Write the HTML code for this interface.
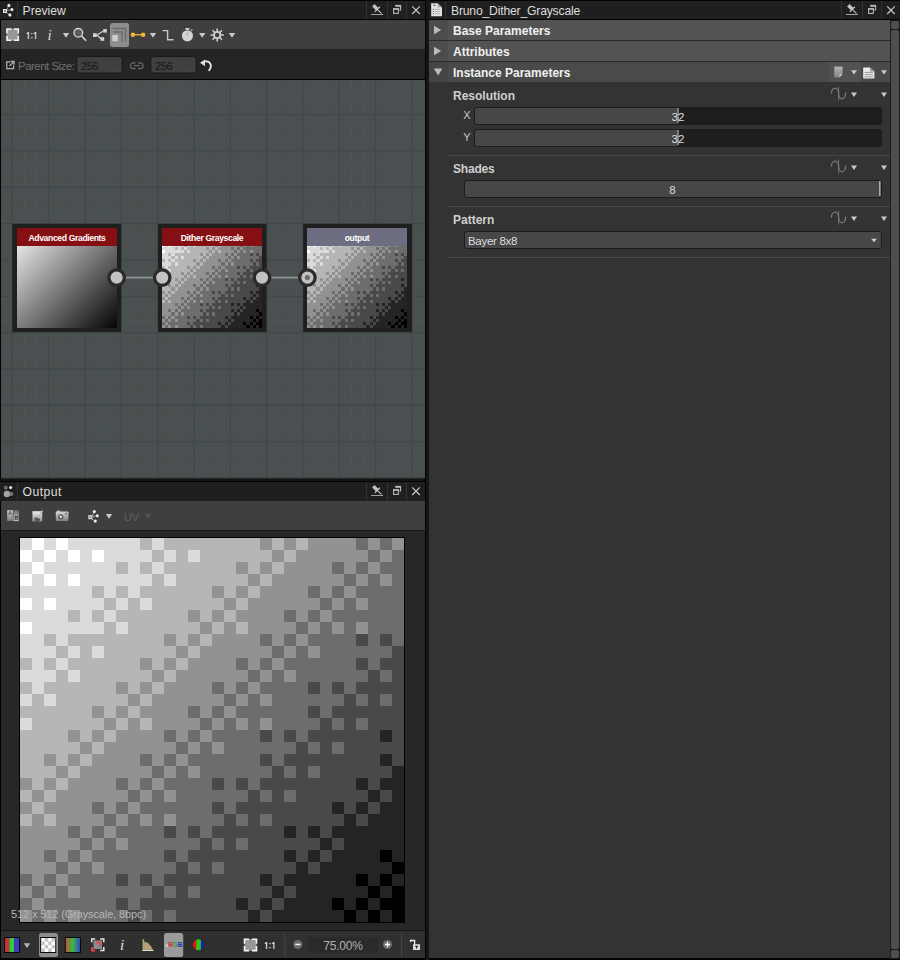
<!DOCTYPE html>
<html><head><meta charset="utf-8"><title>Bruno_Dither_Grayscale</title>
<style>
html,body{margin:0;padding:0;}
body{width:900px;height:960px;background:#020202;position:relative;overflow:hidden;font-family:"Liberation Sans",sans-serif;font-size:13px;color:#d6d6d6;}
.a{position:absolute;}
.t{position:absolute;white-space:nowrap;line-height:1;}
svg{position:absolute;overflow:visible;}
.ntitle{text-align:center;font-weight:bold;font-size:8.6px;color:#fff;letter-spacing:-0.36px;}
.titlebar{background:#1f1f1f;}
.vsep{position:absolute;width:1px;background:#323232;}
.hdr{position:absolute;left:429px;width:461px;height:20px;background:#535353;}
.hdr .arr{position:absolute;left:0;top:0;width:19px;height:20px;background:#4c4c4c;}
.hdr .t{left:24px;top:5px;font-weight:bold;font-size:12px;color:#f0f0f0;}
.plabel{font-weight:bold;font-size:12px;color:#cfcfcf;}
.slider{position:absolute;height:15.5px;border:1px solid #1c1c1c;border-radius:3px;background:#1e1e1e;overflow:hidden;}
.slider .fill{position:absolute;left:0;top:0;bottom:0;background:#474747;}
.sep{position:absolute;left:448px;width:442px;height:1px;background:#474747;}
</style></head><body>

<!-- ================= LEFT: PREVIEW PANEL ================= -->
<div class="a titlebar" style="left:0;top:1px;width:425px;height:18px;"></div>
<div class="vsep" style="left:17px;top:1px;height:18px;"></div>
<div class="t" style="left:22.5px;top:4.5px;font-size:12.2px;color:#dcdcdc;">Preview</div>
<div class="vsep" style="left:366px;top:1px;height:18px;"></div>
<div class="vsep" style="left:387px;top:1px;height:18px;"></div>
<div class="vsep" style="left:406px;top:1px;height:18px;"></div>

<div class="a" style="left:1px;top:20px;width:424px;height:29px;background:#3f3f3f;"></div>
<div class="a" style="left:1px;top:49px;width:424px;height:30px;background:#242424;"></div>

<!-- graph view -->
<div class="a" id="graph" style="left:1px;top:80px;width:424px;height:398px;background-color:#4a5050;"></div>
<svg style="left:1px;top:80px;" width="424" height="398" viewBox="1 80 424 398">
<path d="M24.41 80V478M36.52 80V478M60.74 80V478M72.86 80V478M97.08 80V478M109.19 80V478M133.41 80V478M145.52 80V478M169.74 80V478M181.86 80V478M206.08 80V478M218.19 80V478M242.41 80V478M254.52 80V478M278.74 80V478M290.86 80V478M315.08 80V478M327.19 80V478M351.41 80V478M363.52 80V478M387.74 80V478M399.86 80V478M424.08 80V478M1 90.38H425M1 102.49H425M1 126.71H425M1 138.82H425M1 163.04H425M1 175.16H425M1 199.38H425M1 211.49H425M1 235.71H425M1 247.82H425M1 272.04H425M1 284.16H425M1 308.38H425M1 320.49H425M1 344.71H425M1 356.82H425M1 381.04H425M1 393.16H425M1 417.38H425M1 429.49H425M1 453.71H425M1 465.82H425" stroke="#50575a" stroke-opacity="0.75" stroke-width="1" fill="none"/><path d="M12.30 80V478M48.63 80V478M84.97 80V478M121.30 80V478M157.63 80V478M193.97 80V478M230.30 80V478M266.63 80V478M302.97 80V478M339.30 80V478M375.63 80V478M411.97 80V478M1 114.60H425M1 150.93H425M1 187.27H425M1 223.60H425M1 259.93H425M1 296.27H425M1 332.60H425M1 368.93H425M1 405.27H425M1 441.60H425M1 477.93H425" stroke="#41484a" stroke-width="1.3" fill="none"/>
<!-- wires -->
<path d="M117 277.6H162M262 277.6H307" stroke="#8e9494" stroke-width="1.6" fill="none"/>
<!-- node frames -->
<rect x="12.3" y="223.8" width="108.9" height="108.2" fill="#1f1f1f"/>
<rect x="158" y="223.8" width="108.6" height="108.2" fill="#1f1f1f"/>
<rect x="303.2" y="223.8" width="108.8" height="108.2" fill="#1f1f1f"/>
</svg>
<div class="a" style="left:17px;top:228px;width:100px;height:100px;background:linear-gradient(to bottom right,#fbfbfb,#040404);"></div>
<svg style="left:162px;top:228px;" width="100" height="100" viewBox="0 0 32 32" shape-rendering="crispEdges"><rect width="32" height="32" fill="#000000"/><path fill="#242424" d="M0 0h32v1h-32zM0 1h32v1h-32zM0 2h32v1h-32zM0 3h32v1h-32zM0 4h32v1h-32zM0 5h32v1h-32zM0 6h32v1h-32zM0 7h32v1h-32zM0 8h32v1h-32zM0 9h32v1h-32zM0 10h32v1h-32zM0 11h32v1h-32zM0 12h32v1h-32zM0 13h32v1h-32zM0 14h32v1h-32zM0 15h32v1h-32zM0 16h32v1h-32zM0 17h32v1h-32zM0 18h32v1h-32zM0 19h32v1h-32zM0 20h32v1h-32zM0 21h32v1h-32zM0 22h32v1h-32zM0 23h32v1h-32zM0 24h32v1h-32zM0 25h32v1h-32zM0 26h30v1h-30zM31 26h1v1h-1zM0 27h31v1h-31zM0 28h28v1h-28zM29 28h1v1h-1zM31 28h1v1h-1zM0 29h29v1h-29zM30 29h1v1h-1zM0 30h26v1h-26zM27 30h1v1h-1zM29 30h1v1h-1zM0 31h27v1h-27zM28 31h1v1h-1zM30 31h1v1h-1z"/><path fill="#494949" d="M0 0h32v1h-32zM0 1h32v1h-32zM0 2h32v1h-32zM0 3h32v1h-32zM0 4h32v1h-32zM0 5h32v1h-32zM0 6h32v1h-32zM0 7h32v1h-32zM0 8h32v1h-32zM0 9h32v1h-32zM0 10h32v1h-32zM0 11h32v1h-32zM0 12h32v1h-32zM0 13h32v1h-32zM0 14h32v1h-32zM0 15h32v1h-32zM0 16h30v1h-30zM31 16h1v1h-1zM0 17h32v1h-32zM0 18h30v1h-30zM31 18h1v1h-1zM0 19h31v1h-31zM0 20h28v1h-28zM29 20h1v1h-1zM0 21h29v1h-29zM30 21h1v1h-1zM0 22h26v1h-26zM27 22h1v1h-1zM29 22h1v1h-1zM0 23h27v1h-27zM28 23h1v1h-1zM0 24h22v1h-22zM23 24h1v1h-1zM25 24h1v1h-1zM0 25h25v1h-25zM26 25h1v1h-1zM0 26h22v1h-22zM23 26h1v1h-1zM25 26h1v1h-1zM0 27h23v1h-23zM24 27h1v1h-1zM0 28h20v1h-20zM21 28h1v1h-1zM0 29h21v1h-21zM22 29h1v1h-1zM0 30h18v1h-18zM19 30h1v1h-1zM21 30h1v1h-1zM0 31h19v1h-19zM20 31h1v1h-1z"/><path fill="#6d6d6d" d="M0 0h32v1h-32zM0 1h32v1h-32zM0 2h32v1h-32zM0 3h32v1h-32zM0 4h32v1h-32zM0 5h32v1h-32zM0 6h32v1h-32zM0 7h32v1h-32zM0 8h28v1h-28zM29 8h1v1h-1zM31 8h1v1h-1zM0 9h31v1h-31zM0 10h28v1h-28zM29 10h1v1h-1zM0 11h29v1h-29zM30 11h1v1h-1zM0 12h24v1h-24zM25 12h1v1h-1zM27 12h1v1h-1zM0 13h27v1h-27zM28 13h1v1h-1zM30 13h1v1h-1zM0 14h24v1h-24zM25 14h1v1h-1zM0 15h25v1h-25zM26 15h1v1h-1zM28 15h1v1h-1zM0 16h20v1h-20zM21 16h1v1h-1zM23 16h1v1h-1zM0 17h23v1h-23zM24 17h1v1h-1zM26 17h1v1h-1zM0 18h20v1h-20zM21 18h1v1h-1zM0 19h21v1h-21zM22 19h1v1h-1zM24 19h1v1h-1zM0 20h16v1h-16zM17 20h1v1h-1zM19 20h1v1h-1zM0 21h19v1h-19zM20 21h1v1h-1zM22 21h1v1h-1zM0 22h16v1h-16zM17 22h1v1h-1zM0 23h17v1h-17zM18 23h1v1h-1zM20 23h1v1h-1zM0 24h12v1h-12zM13 24h1v1h-1zM15 24h1v1h-1zM0 25h15v1h-15zM16 25h1v1h-1zM18 25h1v1h-1zM0 26h12v1h-12zM13 26h1v1h-1zM0 27h13v1h-13zM14 27h1v1h-1zM16 27h1v1h-1zM0 28h8v1h-8zM9 28h1v1h-1zM11 28h1v1h-1zM0 29h11v1h-11zM12 29h1v1h-1zM14 29h1v1h-1zM0 30h8v1h-8zM9 30h1v1h-1zM0 31h9v1h-9zM10 31h1v1h-1zM12 31h1v1h-1z"/><path fill="#929292" d="M0 0h28v1h-28zM29 0h1v1h-1zM31 0h1v1h-1zM0 1h29v1h-29zM30 1h1v1h-1zM0 2h26v1h-26zM27 2h1v1h-1zM29 2h1v1h-1zM0 3h27v1h-27zM28 3h1v1h-1zM30 3h1v1h-1zM0 4h24v1h-24zM25 4h1v1h-1zM27 4h1v1h-1zM0 5h25v1h-25zM26 5h1v1h-1zM28 5h1v1h-1zM0 6h22v1h-22zM23 6h1v1h-1zM25 6h1v1h-1zM0 7h23v1h-23zM24 7h1v1h-1zM26 7h1v1h-1zM28 7h1v1h-1zM0 8h20v1h-20zM21 8h1v1h-1zM23 8h1v1h-1zM0 9h21v1h-21zM22 9h1v1h-1zM24 9h1v1h-1zM0 10h18v1h-18zM19 10h1v1h-1zM21 10h1v1h-1zM0 11h19v1h-19zM20 11h1v1h-1zM22 11h1v1h-1zM0 12h16v1h-16zM17 12h1v1h-1zM19 12h1v1h-1zM0 13h17v1h-17zM18 13h1v1h-1zM20 13h1v1h-1zM0 14h14v1h-14zM15 14h1v1h-1zM17 14h1v1h-1zM0 15h15v1h-15zM16 15h1v1h-1zM18 15h1v1h-1zM20 15h1v1h-1zM0 16h12v1h-12zM13 16h1v1h-1zM15 16h1v1h-1zM0 17h13v1h-13zM14 17h1v1h-1zM16 17h1v1h-1zM0 18h10v1h-10zM11 18h1v1h-1zM13 18h1v1h-1zM0 19h11v1h-11zM12 19h1v1h-1zM14 19h1v1h-1zM0 20h8v1h-8zM9 20h1v1h-1zM11 20h1v1h-1zM0 21h9v1h-9zM10 21h1v1h-1zM12 21h1v1h-1zM0 22h6v1h-6zM7 22h1v1h-1zM9 22h1v1h-1zM0 23h7v1h-7zM8 23h1v1h-1zM10 23h1v1h-1zM12 23h1v1h-1zM0 24h4v1h-4zM5 24h1v1h-1zM7 24h1v1h-1zM0 25h5v1h-5zM6 25h1v1h-1zM8 25h1v1h-1zM0 26h2v1h-2zM3 26h1v1h-1zM5 26h1v1h-1zM0 27h3v1h-3zM4 27h1v1h-1zM6 27h1v1h-1zM1 28h1v1h-1zM3 28h1v1h-1zM0 29h1v1h-1zM2 29h1v1h-1zM4 29h1v1h-1zM1 30h1v1h-1zM0 31h1v1h-1zM2 31h1v1h-1zM4 31h1v1h-1z"/><path fill="#b6b6b6" d="M0 0h20v1h-20zM21 0h1v1h-1zM23 0h1v1h-1zM0 1h21v1h-21zM22 1h1v1h-1zM0 2h18v1h-18zM19 2h1v1h-1zM21 2h1v1h-1zM0 3h19v1h-19zM20 3h1v1h-1zM0 4h16v1h-16zM17 4h1v1h-1zM19 4h1v1h-1zM0 5h17v1h-17zM18 5h1v1h-1zM0 6h14v1h-14zM15 6h1v1h-1zM17 6h1v1h-1zM0 7h15v1h-15zM16 7h1v1h-1zM18 7h1v1h-1zM0 8h12v1h-12zM13 8h1v1h-1zM15 8h1v1h-1zM0 9h13v1h-13zM14 9h1v1h-1zM0 10h10v1h-10zM11 10h1v1h-1zM13 10h1v1h-1zM0 11h11v1h-11zM12 11h1v1h-1zM0 12h8v1h-8zM9 12h1v1h-1zM11 12h1v1h-1zM0 13h9v1h-9zM10 13h1v1h-1zM0 14h6v1h-6zM7 14h1v1h-1zM9 14h1v1h-1zM0 15h7v1h-7zM8 15h1v1h-1zM10 15h1v1h-1zM0 16h4v1h-4zM5 16h1v1h-1zM7 16h1v1h-1zM0 17h5v1h-5zM6 17h1v1h-1zM0 18h2v1h-2zM3 18h1v1h-1zM5 18h1v1h-1zM0 19h3v1h-3zM4 19h1v1h-1zM1 20h1v1h-1zM3 20h1v1h-1zM0 21h1v1h-1zM2 21h1v1h-1zM1 22h1v1h-1zM0 23h1v1h-1zM2 23h1v1h-1z"/><path fill="#dbdbdb" d="M0 0h10v1h-10zM11 0h1v1h-1zM0 1h11v1h-11zM12 1h1v1h-1zM14 1h1v1h-1zM0 2h8v1h-8zM9 2h1v1h-1zM11 2h1v1h-1zM0 3h11v1h-11zM12 3h1v1h-1zM0 4h6v1h-6zM7 4h1v1h-1zM9 4h1v1h-1zM0 5h7v1h-7zM8 5h1v1h-1zM10 5h1v1h-1zM0 6h4v1h-4zM5 6h1v1h-1zM7 6h1v1h-1zM0 7h7v1h-7zM8 7h1v1h-1zM0 8h2v1h-2zM3 8h1v1h-1zM0 9h3v1h-3zM4 9h1v1h-1zM6 9h1v1h-1zM1 10h1v1h-1zM3 10h1v1h-1zM0 11h3v1h-3zM4 11h1v1h-1zM1 12h1v1h-1zM0 13h1v1h-1zM2 13h1v1h-1zM0 15h1v1h-1z"/><path fill="#ffffff" d="M1 0h1v1h-1zM3 0h1v1h-1zM0 1h1v1h-1zM2 1h1v1h-1zM4 1h1v1h-1zM6 1h1v1h-1zM1 2h1v1h-1zM0 3h1v1h-1zM2 3h1v1h-1zM4 3h1v1h-1zM0 5h1v1h-1zM2 5h1v1h-1zM0 7h1v1h-1z"/></svg>
<svg style="left:307px;top:228px;" width="100" height="100" viewBox="0 0 32 32" shape-rendering="crispEdges"><rect width="32" height="32" fill="#000000"/><path fill="#242424" d="M0 0h32v1h-32zM0 1h32v1h-32zM0 2h32v1h-32zM0 3h32v1h-32zM0 4h32v1h-32zM0 5h32v1h-32zM0 6h32v1h-32zM0 7h32v1h-32zM0 8h32v1h-32zM0 9h32v1h-32zM0 10h32v1h-32zM0 11h32v1h-32zM0 12h32v1h-32zM0 13h32v1h-32zM0 14h32v1h-32zM0 15h32v1h-32zM0 16h32v1h-32zM0 17h32v1h-32zM0 18h32v1h-32zM0 19h32v1h-32zM0 20h32v1h-32zM0 21h32v1h-32zM0 22h32v1h-32zM0 23h32v1h-32zM0 24h32v1h-32zM0 25h32v1h-32zM0 26h30v1h-30zM31 26h1v1h-1zM0 27h31v1h-31zM0 28h28v1h-28zM29 28h1v1h-1zM31 28h1v1h-1zM0 29h29v1h-29zM30 29h1v1h-1zM0 30h26v1h-26zM27 30h1v1h-1zM29 30h1v1h-1zM0 31h27v1h-27zM28 31h1v1h-1zM30 31h1v1h-1z"/><path fill="#494949" d="M0 0h32v1h-32zM0 1h32v1h-32zM0 2h32v1h-32zM0 3h32v1h-32zM0 4h32v1h-32zM0 5h32v1h-32zM0 6h32v1h-32zM0 7h32v1h-32zM0 8h32v1h-32zM0 9h32v1h-32zM0 10h32v1h-32zM0 11h32v1h-32zM0 12h32v1h-32zM0 13h32v1h-32zM0 14h32v1h-32zM0 15h32v1h-32zM0 16h30v1h-30zM31 16h1v1h-1zM0 17h32v1h-32zM0 18h30v1h-30zM31 18h1v1h-1zM0 19h31v1h-31zM0 20h28v1h-28zM29 20h1v1h-1zM0 21h29v1h-29zM30 21h1v1h-1zM0 22h26v1h-26zM27 22h1v1h-1zM29 22h1v1h-1zM0 23h27v1h-27zM28 23h1v1h-1zM0 24h22v1h-22zM23 24h1v1h-1zM25 24h1v1h-1zM0 25h25v1h-25zM26 25h1v1h-1zM0 26h22v1h-22zM23 26h1v1h-1zM25 26h1v1h-1zM0 27h23v1h-23zM24 27h1v1h-1zM0 28h20v1h-20zM21 28h1v1h-1zM0 29h21v1h-21zM22 29h1v1h-1zM0 30h18v1h-18zM19 30h1v1h-1zM21 30h1v1h-1zM0 31h19v1h-19zM20 31h1v1h-1z"/><path fill="#6d6d6d" d="M0 0h32v1h-32zM0 1h32v1h-32zM0 2h32v1h-32zM0 3h32v1h-32zM0 4h32v1h-32zM0 5h32v1h-32zM0 6h32v1h-32zM0 7h32v1h-32zM0 8h28v1h-28zM29 8h1v1h-1zM31 8h1v1h-1zM0 9h31v1h-31zM0 10h28v1h-28zM29 10h1v1h-1zM0 11h29v1h-29zM30 11h1v1h-1zM0 12h24v1h-24zM25 12h1v1h-1zM27 12h1v1h-1zM0 13h27v1h-27zM28 13h1v1h-1zM30 13h1v1h-1zM0 14h24v1h-24zM25 14h1v1h-1zM0 15h25v1h-25zM26 15h1v1h-1zM28 15h1v1h-1zM0 16h20v1h-20zM21 16h1v1h-1zM23 16h1v1h-1zM0 17h23v1h-23zM24 17h1v1h-1zM26 17h1v1h-1zM0 18h20v1h-20zM21 18h1v1h-1zM0 19h21v1h-21zM22 19h1v1h-1zM24 19h1v1h-1zM0 20h16v1h-16zM17 20h1v1h-1zM19 20h1v1h-1zM0 21h19v1h-19zM20 21h1v1h-1zM22 21h1v1h-1zM0 22h16v1h-16zM17 22h1v1h-1zM0 23h17v1h-17zM18 23h1v1h-1zM20 23h1v1h-1zM0 24h12v1h-12zM13 24h1v1h-1zM15 24h1v1h-1zM0 25h15v1h-15zM16 25h1v1h-1zM18 25h1v1h-1zM0 26h12v1h-12zM13 26h1v1h-1zM0 27h13v1h-13zM14 27h1v1h-1zM16 27h1v1h-1zM0 28h8v1h-8zM9 28h1v1h-1zM11 28h1v1h-1zM0 29h11v1h-11zM12 29h1v1h-1zM14 29h1v1h-1zM0 30h8v1h-8zM9 30h1v1h-1zM0 31h9v1h-9zM10 31h1v1h-1zM12 31h1v1h-1z"/><path fill="#929292" d="M0 0h28v1h-28zM29 0h1v1h-1zM31 0h1v1h-1zM0 1h29v1h-29zM30 1h1v1h-1zM0 2h26v1h-26zM27 2h1v1h-1zM29 2h1v1h-1zM0 3h27v1h-27zM28 3h1v1h-1zM30 3h1v1h-1zM0 4h24v1h-24zM25 4h1v1h-1zM27 4h1v1h-1zM0 5h25v1h-25zM26 5h1v1h-1zM28 5h1v1h-1zM0 6h22v1h-22zM23 6h1v1h-1zM25 6h1v1h-1zM0 7h23v1h-23zM24 7h1v1h-1zM26 7h1v1h-1zM28 7h1v1h-1zM0 8h20v1h-20zM21 8h1v1h-1zM23 8h1v1h-1zM0 9h21v1h-21zM22 9h1v1h-1zM24 9h1v1h-1zM0 10h18v1h-18zM19 10h1v1h-1zM21 10h1v1h-1zM0 11h19v1h-19zM20 11h1v1h-1zM22 11h1v1h-1zM0 12h16v1h-16zM17 12h1v1h-1zM19 12h1v1h-1zM0 13h17v1h-17zM18 13h1v1h-1zM20 13h1v1h-1zM0 14h14v1h-14zM15 14h1v1h-1zM17 14h1v1h-1zM0 15h15v1h-15zM16 15h1v1h-1zM18 15h1v1h-1zM20 15h1v1h-1zM0 16h12v1h-12zM13 16h1v1h-1zM15 16h1v1h-1zM0 17h13v1h-13zM14 17h1v1h-1zM16 17h1v1h-1zM0 18h10v1h-10zM11 18h1v1h-1zM13 18h1v1h-1zM0 19h11v1h-11zM12 19h1v1h-1zM14 19h1v1h-1zM0 20h8v1h-8zM9 20h1v1h-1zM11 20h1v1h-1zM0 21h9v1h-9zM10 21h1v1h-1zM12 21h1v1h-1zM0 22h6v1h-6zM7 22h1v1h-1zM9 22h1v1h-1zM0 23h7v1h-7zM8 23h1v1h-1zM10 23h1v1h-1zM12 23h1v1h-1zM0 24h4v1h-4zM5 24h1v1h-1zM7 24h1v1h-1zM0 25h5v1h-5zM6 25h1v1h-1zM8 25h1v1h-1zM0 26h2v1h-2zM3 26h1v1h-1zM5 26h1v1h-1zM0 27h3v1h-3zM4 27h1v1h-1zM6 27h1v1h-1zM1 28h1v1h-1zM3 28h1v1h-1zM0 29h1v1h-1zM2 29h1v1h-1zM4 29h1v1h-1zM1 30h1v1h-1zM0 31h1v1h-1zM2 31h1v1h-1zM4 31h1v1h-1z"/><path fill="#b6b6b6" d="M0 0h20v1h-20zM21 0h1v1h-1zM23 0h1v1h-1zM0 1h21v1h-21zM22 1h1v1h-1zM0 2h18v1h-18zM19 2h1v1h-1zM21 2h1v1h-1zM0 3h19v1h-19zM20 3h1v1h-1zM0 4h16v1h-16zM17 4h1v1h-1zM19 4h1v1h-1zM0 5h17v1h-17zM18 5h1v1h-1zM0 6h14v1h-14zM15 6h1v1h-1zM17 6h1v1h-1zM0 7h15v1h-15zM16 7h1v1h-1zM18 7h1v1h-1zM0 8h12v1h-12zM13 8h1v1h-1zM15 8h1v1h-1zM0 9h13v1h-13zM14 9h1v1h-1zM0 10h10v1h-10zM11 10h1v1h-1zM13 10h1v1h-1zM0 11h11v1h-11zM12 11h1v1h-1zM0 12h8v1h-8zM9 12h1v1h-1zM11 12h1v1h-1zM0 13h9v1h-9zM10 13h1v1h-1zM0 14h6v1h-6zM7 14h1v1h-1zM9 14h1v1h-1zM0 15h7v1h-7zM8 15h1v1h-1zM10 15h1v1h-1zM0 16h4v1h-4zM5 16h1v1h-1zM7 16h1v1h-1zM0 17h5v1h-5zM6 17h1v1h-1zM0 18h2v1h-2zM3 18h1v1h-1zM5 18h1v1h-1zM0 19h3v1h-3zM4 19h1v1h-1zM1 20h1v1h-1zM3 20h1v1h-1zM0 21h1v1h-1zM2 21h1v1h-1zM1 22h1v1h-1zM0 23h1v1h-1zM2 23h1v1h-1z"/><path fill="#dbdbdb" d="M0 0h10v1h-10zM11 0h1v1h-1zM0 1h11v1h-11zM12 1h1v1h-1zM14 1h1v1h-1zM0 2h8v1h-8zM9 2h1v1h-1zM11 2h1v1h-1zM0 3h11v1h-11zM12 3h1v1h-1zM0 4h6v1h-6zM7 4h1v1h-1zM9 4h1v1h-1zM0 5h7v1h-7zM8 5h1v1h-1zM10 5h1v1h-1zM0 6h4v1h-4zM5 6h1v1h-1zM7 6h1v1h-1zM0 7h7v1h-7zM8 7h1v1h-1zM0 8h2v1h-2zM3 8h1v1h-1zM0 9h3v1h-3zM4 9h1v1h-1zM6 9h1v1h-1zM1 10h1v1h-1zM3 10h1v1h-1zM0 11h3v1h-3zM4 11h1v1h-1zM1 12h1v1h-1zM0 13h1v1h-1zM2 13h1v1h-1zM0 15h1v1h-1z"/><path fill="#ffffff" d="M1 0h1v1h-1zM3 0h1v1h-1zM0 1h1v1h-1zM2 1h1v1h-1zM4 1h1v1h-1zM6 1h1v1h-1zM1 2h1v1h-1zM0 3h1v1h-1zM2 3h1v1h-1zM4 3h1v1h-1zM0 5h1v1h-1zM2 5h1v1h-1zM0 7h1v1h-1z"/></svg>
<div class="a" style="left:17px;top:228px;width:100px;height:18px;background:#860f14;"></div>
<div class="a" style="left:162px;top:228px;width:100px;height:18px;background:#860f14;"></div>
<div class="a" style="left:307px;top:228px;width:100px;height:18px;background:#6e6e82;"></div>
<div class="t ntitle" style="left:17px;width:100px;top:234.300px;">Advanced Gradients</div>
<div class="t ntitle" style="left:162px;width:100px;top:234.300px;">Dither Grayscale</div>
<div class="t ntitle" style="left:307px;width:100px;top:234.300px;">output</div>
<svg style="left:1px;top:80px;" width="424" height="398" viewBox="1 80 424 398">
<g fill="#c2c2c2" stroke="#2b2b2b" stroke-width="3.300">
<circle cx="116.6" cy="277.6" r="7.750"/><circle cx="162.2" cy="277.6" r="7.750"/><circle cx="262" cy="277.6" r="7.750"/><circle cx="307.4" cy="277.6" r="7.750"/>
</g>
<circle cx="307.4" cy="277.6" r="2.6" fill="#6c6c6c"/>
</svg>

<!-- preview icons -->
<svg style="left:0;top:0;" width="426" height="80">
<!-- title graph icon -->
<g stroke="#e8e8e8" stroke-width="1" fill="none"><path d="M7 10.6L10.5 9.8M6.6 12.8L9.2 14.4M7 9.5L8.4 6.4" stroke-opacity="0.55"/><rect x="3.5" y="9.5" width="3" height="3" fill="#8a8a8a"/></g>
<g fill="#eeeeee"><circle cx="8.9" cy="5.4" r="1.550"/><circle cx="11.9" cy="9.6" r="1.550"/><circle cx="9.9" cy="14.9" r="1.550"/></g>
<!-- window buttons -->
<g transform="translate(0,0)" fill="none" stroke="#c4c4c4">
<path d="M371 14.500H383" stroke="#a0a0a0" stroke-width="1"/>
<path d="M373.300 5.300L377.300 9.300" stroke-width="3.400"/><path d="M374.800 11.900L379.900 6.800" stroke-width="1.300"/><path d="M377.300 9.300L381.400 13.400" stroke-width="1.100"/>
<path d="M395.600 6.200H400.600V10H399.200" stroke="#b8b8b8" stroke-width="1.100"/><path d="M395.100 5.600H401.100" stroke="#b8b8b8" stroke-width="1.500"/>
<rect x="393.600" y="9" width="4.700" height="4.400" stroke="#b8b8b8" stroke-width="1.100"/><path d="M393.100 8.800H398.900" stroke="#b8b8b8" stroke-width="1.500"/>
<path d="M412.200 6.400L419.800 14M419.800 6.400L412.200 14" stroke="#cfcfcf" stroke-width="1.100"/>
</g>
<!-- fit icon -->
<rect x="7" y="29" width="11.30" height="11.30" fill="#979797"/><path d="M7 33.6V29H11.6M13.700000000000001 29H18.3V33.6M18.3 35.699999999999996V40.3H13.700000000000001M11.6 40.3H7V35.699999999999996" stroke="#f4f4f4" stroke-width="1.6" fill="none" stroke-linecap="butt"/>
<!-- info i drawn as text below -->
<!-- triangles -->
<g fill="#c9c9c9"><path d="M62.8 33H69.2L66 37.8Z"/><path d="M149.8 33H156.2L153 37.8Z"/><path d="M199 33H205.4L202.2 37.8Z"/><path d="M228.8 33H235.2L232 37.8Z"/></g>
<!-- magnifier -->
<circle cx="78.3" cy="32.8" r="4.3" stroke="#d8d8d8" stroke-width="1.3" fill="#5a5a5a"/><path d="M81.5 36L86.2 40.7" stroke="#d8d8d8" stroke-width="1.6"/>
<!-- share/graph icon -->
<path d="M97 35L101 32.5L103.5 31M97 35L99.5 37.5L101 39" stroke="#d0d0d0" stroke-width="1.2" fill="none"/>
<g fill="#cfcfcf"><rect x="93" y="33.2" width="3.8" height="3.8"/><rect x="103.2" y="29" width="3.6" height="3.6"/><rect x="100.6" y="37.2" width="3.6" height="3.6"/></g>
<!-- highlighted button -->
<rect x="110" y="23" width="19" height="24" rx="2.5" fill="#8d8d8d"/>
<path d="M112.5 28.5H125.5V42M113.5 32H122V42" stroke="#6a6a6a" stroke-width="1.3" fill="none"/>
<rect x="112.3" y="35" width="5.6" height="6.2" fill="#cecece"/>
<!-- link icon -->
<path d="M133 34.7H143" stroke="#f0b33c" stroke-width="1.3"/><circle cx="132.9" cy="34.7" r="2.3" fill="#f0b33c"/><circle cx="143.1" cy="34.7" r="2.3" fill="#f0b33c"/>
<!-- step icon -->
<path d="M162.6 30.6H167.6V39.8H173.4" stroke="#c9c9c9" stroke-width="1.4" fill="none"/>
<!-- stopwatch -->
<circle cx="187.4" cy="35.8" r="5.6" fill="#d2d2d2"/><rect x="185.4" y="28" width="4" height="1.8" fill="#d2d2d2"/><path d="M191 30.6l1.4-1.2" stroke="#d2d2d2" stroke-width="1.2"/><path d="M187.4 32.5V36.2" stroke="#a8a8a8" stroke-width="1"/>
<!-- gear -->
<g stroke="#d4d4d4" stroke-width="1.5" fill="none"><circle cx="217.2" cy="35" r="3.2" stroke-width="1.8"/><path d="M217.2 28.4V31M217.2 39V41.6M210.6 35H213.2M221.2 35H223.8M212.5 30.3L214.4 32.2M220 37.8L221.9 39.7M212.5 39.7L214.4 37.8M220 32.2L221.9 30.3"/></g>
<!-- parent size: external-link icon -->
<path d="M10.5 61.8H6.8V68.7H13.6V65.2" stroke="#b4b4b4" stroke-width="1.2" fill="none"/><path d="M9.5 66L13.5 62M10.8 61.4H14.1V64.7" stroke="#b4b4b4" stroke-width="1.2" fill="none"/>
<!-- inputs -->
<rect x="76.800" y="56.600" width="45.400" height="16.400" rx="2.800" fill="#404040" stroke="#191919" stroke-width="1"/>
<rect x="150.800" y="56.600" width="45.400" height="16.400" rx="2.800" fill="#404040" stroke="#191919" stroke-width="1"/>
<path d="M112.800 64.200h4.400l-2.200 2.800zM186.800 64.200h4.400l-2.200 2.800z" fill="#393939"/>
<!-- chain link -->
<g stroke="#6c6c6c" stroke-width="1.2" fill="none"><path d="M135.5 62.8H133.4a2.9 2.9 0 0 0 0 5.8H135.5M138 62.8H140.1a2.9 2.9 0 0 1 0 5.8H138M134 65.7H139.6"/></g>
<!-- undo arrow -->
<path d="M204.5 61.3C209.5 60.8 211.6 64 210.6 67.6C210.3 68.8 209.6 69.9 208.6 70.7" stroke="#e2e2e2" stroke-width="1.9" fill="none"/><path d="M200 62.8L205 59.6V66.2Z" fill="#e2e2e2"/>
</svg>
<div class="t" style="left:25.200px;top:31px;font-size:9.400px;font-weight:bold;font-family:'NanumGothic','Liberation Sans',sans-serif;color:#e4e4e4;letter-spacing:-0.600px;">1:1</div>
<div class="t" style="left:47.5px;top:28px;font-size:15px;font-style:italic;font-family:'Liberation Serif',serif;color:#dcdcdc;">i</div>
<div class="t" style="left:18px;top:60.5px;font-size:11.5px;color:#707070;letter-spacing:-0.52px;">Parent Size:</div>
<div class="t" style="left:81px;top:61px;font-size:11px;color:#141414;letter-spacing:-0.35px;">256</div>
<div class="t" style="left:155px;top:61px;font-size:11px;color:#141414;letter-spacing:-0.35px;">256</div>

<!-- ================= LEFT: OUTPUT PANEL ================= -->
<div class="a titlebar" style="left:0;top:482px;width:425px;height:19px;"></div>
<div class="vsep" style="left:17px;top:482px;height:19px;"></div>
<div class="t" style="left:22.5px;top:485.5px;font-size:12.2px;color:#dcdcdc;letter-spacing:0.45px;">Output</div>
<div class="vsep" style="left:366px;top:482px;height:19px;"></div>
<div class="vsep" style="left:387px;top:482px;height:19px;"></div>
<div class="vsep" style="left:406px;top:482px;height:19px;"></div>
<div class="a" style="left:1px;top:501px;width:424px;height:29px;background:#3f3f3f;"></div><div class="a" style="left:1px;top:530px;width:424px;height:1px;background:#1b1b1b;"></div>
<div class="a" style="left:1px;top:531px;width:424px;height:399px;background:#272727;"></div><div class="a" style="left:19px;top:537px;width:386px;height:386px;background:#000;"></div>
<svg style="left:20px;top:538px;" width="384" height="384" viewBox="0 0 32 32" shape-rendering="crispEdges"><rect width="32" height="32" fill="#000000"/><path fill="#242424" d="M0 0h32v1h-32zM0 1h32v1h-32zM0 2h32v1h-32zM0 3h32v1h-32zM0 4h32v1h-32zM0 5h32v1h-32zM0 6h32v1h-32zM0 7h32v1h-32zM0 8h32v1h-32zM0 9h32v1h-32zM0 10h32v1h-32zM0 11h32v1h-32zM0 12h32v1h-32zM0 13h32v1h-32zM0 14h32v1h-32zM0 15h32v1h-32zM0 16h32v1h-32zM0 17h32v1h-32zM0 18h32v1h-32zM0 19h32v1h-32zM0 20h32v1h-32zM0 21h32v1h-32zM0 22h32v1h-32zM0 23h32v1h-32zM0 24h32v1h-32zM0 25h32v1h-32zM0 26h30v1h-30zM31 26h1v1h-1zM0 27h31v1h-31zM0 28h28v1h-28zM29 28h1v1h-1zM31 28h1v1h-1zM0 29h29v1h-29zM30 29h1v1h-1zM0 30h26v1h-26zM27 30h1v1h-1zM29 30h1v1h-1zM0 31h27v1h-27zM28 31h1v1h-1zM30 31h1v1h-1z"/><path fill="#494949" d="M0 0h32v1h-32zM0 1h32v1h-32zM0 2h32v1h-32zM0 3h32v1h-32zM0 4h32v1h-32zM0 5h32v1h-32zM0 6h32v1h-32zM0 7h32v1h-32zM0 8h32v1h-32zM0 9h32v1h-32zM0 10h32v1h-32zM0 11h32v1h-32zM0 12h32v1h-32zM0 13h32v1h-32zM0 14h32v1h-32zM0 15h32v1h-32zM0 16h30v1h-30zM31 16h1v1h-1zM0 17h32v1h-32zM0 18h30v1h-30zM31 18h1v1h-1zM0 19h31v1h-31zM0 20h28v1h-28zM29 20h1v1h-1zM0 21h29v1h-29zM30 21h1v1h-1zM0 22h26v1h-26zM27 22h1v1h-1zM29 22h1v1h-1zM0 23h27v1h-27zM28 23h1v1h-1zM0 24h22v1h-22zM23 24h1v1h-1zM25 24h1v1h-1zM0 25h25v1h-25zM26 25h1v1h-1zM0 26h22v1h-22zM23 26h1v1h-1zM25 26h1v1h-1zM0 27h23v1h-23zM24 27h1v1h-1zM0 28h20v1h-20zM21 28h1v1h-1zM0 29h21v1h-21zM22 29h1v1h-1zM0 30h18v1h-18zM19 30h1v1h-1zM21 30h1v1h-1zM0 31h19v1h-19zM20 31h1v1h-1z"/><path fill="#6d6d6d" d="M0 0h32v1h-32zM0 1h32v1h-32zM0 2h32v1h-32zM0 3h32v1h-32zM0 4h32v1h-32zM0 5h32v1h-32zM0 6h32v1h-32zM0 7h32v1h-32zM0 8h28v1h-28zM29 8h1v1h-1zM31 8h1v1h-1zM0 9h31v1h-31zM0 10h28v1h-28zM29 10h1v1h-1zM0 11h29v1h-29zM30 11h1v1h-1zM0 12h24v1h-24zM25 12h1v1h-1zM27 12h1v1h-1zM0 13h27v1h-27zM28 13h1v1h-1zM30 13h1v1h-1zM0 14h24v1h-24zM25 14h1v1h-1zM0 15h25v1h-25zM26 15h1v1h-1zM28 15h1v1h-1zM0 16h20v1h-20zM21 16h1v1h-1zM23 16h1v1h-1zM0 17h23v1h-23zM24 17h1v1h-1zM26 17h1v1h-1zM0 18h20v1h-20zM21 18h1v1h-1zM0 19h21v1h-21zM22 19h1v1h-1zM24 19h1v1h-1zM0 20h16v1h-16zM17 20h1v1h-1zM19 20h1v1h-1zM0 21h19v1h-19zM20 21h1v1h-1zM22 21h1v1h-1zM0 22h16v1h-16zM17 22h1v1h-1zM0 23h17v1h-17zM18 23h1v1h-1zM20 23h1v1h-1zM0 24h12v1h-12zM13 24h1v1h-1zM15 24h1v1h-1zM0 25h15v1h-15zM16 25h1v1h-1zM18 25h1v1h-1zM0 26h12v1h-12zM13 26h1v1h-1zM0 27h13v1h-13zM14 27h1v1h-1zM16 27h1v1h-1zM0 28h8v1h-8zM9 28h1v1h-1zM11 28h1v1h-1zM0 29h11v1h-11zM12 29h1v1h-1zM14 29h1v1h-1zM0 30h8v1h-8zM9 30h1v1h-1zM0 31h9v1h-9zM10 31h1v1h-1zM12 31h1v1h-1z"/><path fill="#929292" d="M0 0h28v1h-28zM29 0h1v1h-1zM31 0h1v1h-1zM0 1h29v1h-29zM30 1h1v1h-1zM0 2h26v1h-26zM27 2h1v1h-1zM29 2h1v1h-1zM0 3h27v1h-27zM28 3h1v1h-1zM30 3h1v1h-1zM0 4h24v1h-24zM25 4h1v1h-1zM27 4h1v1h-1zM0 5h25v1h-25zM26 5h1v1h-1zM28 5h1v1h-1zM0 6h22v1h-22zM23 6h1v1h-1zM25 6h1v1h-1zM0 7h23v1h-23zM24 7h1v1h-1zM26 7h1v1h-1zM28 7h1v1h-1zM0 8h20v1h-20zM21 8h1v1h-1zM23 8h1v1h-1zM0 9h21v1h-21zM22 9h1v1h-1zM24 9h1v1h-1zM0 10h18v1h-18zM19 10h1v1h-1zM21 10h1v1h-1zM0 11h19v1h-19zM20 11h1v1h-1zM22 11h1v1h-1zM0 12h16v1h-16zM17 12h1v1h-1zM19 12h1v1h-1zM0 13h17v1h-17zM18 13h1v1h-1zM20 13h1v1h-1zM0 14h14v1h-14zM15 14h1v1h-1zM17 14h1v1h-1zM0 15h15v1h-15zM16 15h1v1h-1zM18 15h1v1h-1zM20 15h1v1h-1zM0 16h12v1h-12zM13 16h1v1h-1zM15 16h1v1h-1zM0 17h13v1h-13zM14 17h1v1h-1zM16 17h1v1h-1zM0 18h10v1h-10zM11 18h1v1h-1zM13 18h1v1h-1zM0 19h11v1h-11zM12 19h1v1h-1zM14 19h1v1h-1zM0 20h8v1h-8zM9 20h1v1h-1zM11 20h1v1h-1zM0 21h9v1h-9zM10 21h1v1h-1zM12 21h1v1h-1zM0 22h6v1h-6zM7 22h1v1h-1zM9 22h1v1h-1zM0 23h7v1h-7zM8 23h1v1h-1zM10 23h1v1h-1zM12 23h1v1h-1zM0 24h4v1h-4zM5 24h1v1h-1zM7 24h1v1h-1zM0 25h5v1h-5zM6 25h1v1h-1zM8 25h1v1h-1zM0 26h2v1h-2zM3 26h1v1h-1zM5 26h1v1h-1zM0 27h3v1h-3zM4 27h1v1h-1zM6 27h1v1h-1zM1 28h1v1h-1zM3 28h1v1h-1zM0 29h1v1h-1zM2 29h1v1h-1zM4 29h1v1h-1zM1 30h1v1h-1zM0 31h1v1h-1zM2 31h1v1h-1zM4 31h1v1h-1z"/><path fill="#b6b6b6" d="M0 0h20v1h-20zM21 0h1v1h-1zM23 0h1v1h-1zM0 1h21v1h-21zM22 1h1v1h-1zM0 2h18v1h-18zM19 2h1v1h-1zM21 2h1v1h-1zM0 3h19v1h-19zM20 3h1v1h-1zM0 4h16v1h-16zM17 4h1v1h-1zM19 4h1v1h-1zM0 5h17v1h-17zM18 5h1v1h-1zM0 6h14v1h-14zM15 6h1v1h-1zM17 6h1v1h-1zM0 7h15v1h-15zM16 7h1v1h-1zM18 7h1v1h-1zM0 8h12v1h-12zM13 8h1v1h-1zM15 8h1v1h-1zM0 9h13v1h-13zM14 9h1v1h-1zM0 10h10v1h-10zM11 10h1v1h-1zM13 10h1v1h-1zM0 11h11v1h-11zM12 11h1v1h-1zM0 12h8v1h-8zM9 12h1v1h-1zM11 12h1v1h-1zM0 13h9v1h-9zM10 13h1v1h-1zM0 14h6v1h-6zM7 14h1v1h-1zM9 14h1v1h-1zM0 15h7v1h-7zM8 15h1v1h-1zM10 15h1v1h-1zM0 16h4v1h-4zM5 16h1v1h-1zM7 16h1v1h-1zM0 17h5v1h-5zM6 17h1v1h-1zM0 18h2v1h-2zM3 18h1v1h-1zM5 18h1v1h-1zM0 19h3v1h-3zM4 19h1v1h-1zM1 20h1v1h-1zM3 20h1v1h-1zM0 21h1v1h-1zM2 21h1v1h-1zM1 22h1v1h-1zM0 23h1v1h-1zM2 23h1v1h-1z"/><path fill="#dbdbdb" d="M0 0h10v1h-10zM11 0h1v1h-1zM0 1h11v1h-11zM12 1h1v1h-1zM14 1h1v1h-1zM0 2h8v1h-8zM9 2h1v1h-1zM11 2h1v1h-1zM0 3h11v1h-11zM12 3h1v1h-1zM0 4h6v1h-6zM7 4h1v1h-1zM9 4h1v1h-1zM0 5h7v1h-7zM8 5h1v1h-1zM10 5h1v1h-1zM0 6h4v1h-4zM5 6h1v1h-1zM7 6h1v1h-1zM0 7h7v1h-7zM8 7h1v1h-1zM0 8h2v1h-2zM3 8h1v1h-1zM0 9h3v1h-3zM4 9h1v1h-1zM6 9h1v1h-1zM1 10h1v1h-1zM3 10h1v1h-1zM0 11h3v1h-3zM4 11h1v1h-1zM1 12h1v1h-1zM0 13h1v1h-1zM2 13h1v1h-1zM0 15h1v1h-1z"/><path fill="#ffffff" d="M1 0h1v1h-1zM3 0h1v1h-1zM0 1h1v1h-1zM2 1h1v1h-1zM4 1h1v1h-1zM6 1h1v1h-1zM1 2h1v1h-1zM0 3h1v1h-1zM2 3h1v1h-1zM4 3h1v1h-1zM0 5h1v1h-1zM2 5h1v1h-1zM0 7h1v1h-1z"/></svg>
<div class="t" style="left:11px;top:908.5px;font-size:11px;color:#b6b6b6;letter-spacing:-0.12px;">512 x 512 (Grayscale, 8bpc)</div>
<div class="a" style="left:1px;top:930px;width:424px;height:1.2px;background:#161616;"></div><div class="a" style="left:1px;top:931.2px;width:424px;height:27.2px;background:#303030;"></div>

<!-- output icons -->
<svg style="left:0;top:480px;" width="426" height="480" viewBox="0 480 426 480">
<defs>
<linearGradient id="gg" x1="0" y1="0" x2="0" y2="1"><stop offset="0" stop-color="#d8d8d8"/><stop offset="1" stop-color="#7e7e7e"/></linearGradient>
<linearGradient id="gg2" x1="0" y1="0" x2="0" y2="1"><stop offset="0" stop-color="#6e6e6e"/><stop offset="1" stop-color="#c4c4c4"/></linearGradient>
<linearGradient id="gg3" x1="0" y1="0" x2="0" y2="1"><stop offset="0" stop-color="#f0f0f0"/><stop offset="1" stop-color="#909090"/></linearGradient>
<linearGradient id="rgbg" x1="0" y1="0" x2="1" y2="0"><stop offset="0" stop-color="#b85a3c"/><stop offset="0.5" stop-color="#3cb83c"/><stop offset="1" stop-color="#3048c8"/></linearGradient>
<radialGradient id="cc"><stop offset="0.6" stop-color="#fff" stop-opacity="1"/><stop offset="1" stop-color="#fff" stop-opacity="0"/></radialGradient>
</defs>
<!-- title icon -->
<circle cx="5.8" cy="487.8" r="2" fill="#6a6a6a"/><circle cx="10.6" cy="487.6" r="1.5" fill="#f2f2f2"/><circle cx="11.2" cy="494" r="2.1" fill="#777"/><circle cx="6.9" cy="494" r="3.2" fill="#a2a2a2"/>
<!-- window buttons -->
<g transform="translate(0,481)" fill="none" stroke="#c4c4c4">
<path d="M371 14.500H383" stroke="#a0a0a0" stroke-width="1"/>
<path d="M373.300 5.300L377.300 9.300" stroke-width="3.400"/><path d="M374.800 11.900L379.900 6.800" stroke-width="1.300"/><path d="M377.300 9.300L381.400 13.400" stroke-width="1.100"/>
<path d="M395.600 6.200H400.600V10H399.200" stroke="#b8b8b8" stroke-width="1.100"/><path d="M395.100 5.600H401.100" stroke="#b8b8b8" stroke-width="1.500"/>
<rect x="393.600" y="9" width="4.700" height="4.400" stroke="#b8b8b8" stroke-width="1.100"/><path d="M393.100 8.800H398.900" stroke="#b8b8b8" stroke-width="1.500"/>
<path d="M412.200 6.400L419.800 14M419.800 6.400L412.200 14" stroke="#cfcfcf" stroke-width="1.100"/>
</g>
<!-- AB icon -->
<rect x="7.2" y="510.3" width="5.6" height="10.6" fill="url(#gg)"/><rect x="13.400" y="510.300" width="5.400" height="10.800" fill="url(#gg2)"/>
<!-- save icon -->
<path d="M32.400 511.200H42.200V521.400H32.400Z" fill="url(#gg3)"/><rect x="34.6" y="517.6" width="5.2" height="3.4" fill="#555"/><path d="M38.4 518.4L42.2 510.6" stroke="#e6e6e6" stroke-width="1.6"/><path d="M38.2 518.6L42 510.8" stroke="#555" stroke-width="0.5"/>
<!-- camera icon -->
<rect x="55.8" y="511.5" width="12.6" height="9.6" rx="0.8" fill="url(#gg)"/><rect x="57" y="510.5" width="3" height="1.4" fill="#c8c8c8"/><circle cx="60.8" cy="516.8" r="2.6" fill="#555"/><circle cx="60.8" cy="516.8" r="1.3" fill="#e0e0e0"/><rect x="65.2" y="512.8" width="1.8" height="1.6" fill="#666"/>
<!-- share icon -->
<g transform="translate(85.4,506.2)"><g stroke="#e8e8e8" stroke-width="1" fill="none"><path d="M7 10.6L10.5 9.8M6.6 12.8L9.2 14.4M7 9.5L8.4 6.4" stroke-opacity="0.55"/><rect x="3.5" y="9.5" width="3" height="3" fill="#8a8a8a"/></g>
<g fill="#eeeeee"><circle cx="8.9" cy="5.4" r="1.550"/><circle cx="11.9" cy="9.6" r="1.550"/><circle cx="9.9" cy="14.9" r="1.550"/></g></g>
<path d="M105.8 514H112.2L109 518.8Z" fill="#c9c9c9"/><path d="M145.2 514H151.4L148.3 518.6Z" fill="#565656"/>
<!-- bottom toolbar -->
<rect x="4" y="937" width="16" height="16" fill="#0a0a0a"/><rect x="5" y="938" width="4.3" height="14" fill="#c8323c"/><rect x="9.3" y="938" width="5" height="14" fill="#3cc83c"/><rect x="14.3" y="938" width="4.7" height="14" fill="#3c3cc8"/>
<path d="M23.8 943.2H30.2L27 948Z" fill="#b4b4b4"/>
<rect x="39" y="933" width="19" height="24" rx="2.5" fill="#8d8d8d"/>
<rect x="40.2" y="937" width="16" height="16" fill="#0a0a0a"/><rect x="41.2" y="938" width="14" height="14" fill="#fff"/>
<path d="M44.7 938h3.5v3.5h-3.5zM51.7 938h3.5v3.5h-3.5zM41.2 941.5h3.5v3.5h-3.5zM48.2 941.5h3.5v3.5h-3.5zM44.7 945h3.5v3.5h-3.5zM51.7 945h3.5v3.5h-3.5zM41.2 948.500h3.5v3.5h-3.5zM48.2 948.5h3.5v3.5h-3.5z" fill="#c4c4c4"/>
<rect x="64.8" y="937" width="16.2" height="16" fill="#0a0a0a"/><rect x="65.8" y="938" width="14.2" height="14" fill="url(#rgbg)"/>
<!-- fit with red -->
<rect x="93.5" y="940.5" width="8.5" height="8.5" fill="#8c8c8c"/>
<path d="M91.7 942.3V938.9H95.2M100.2 938.9H103.8V942.3M103.8 947V950.6H100.2" stroke="#e8e8e8" stroke-width="1.5" fill="none"/>
<path d="M95.2 950.4H92V947.2" stroke="#f04040" stroke-width="2" fill="none"/><path d="M96.5 942.6H100V946.2" stroke="#f04040" stroke-width="1.8" fill="none"/>
<!-- histogram -->
<path d="M142.6 949.8V939L144 939.2L144.8 943L146.2 941.4L147 943.2L148.2 942.4L149 944.6L150.4 945.2L153 949.8Z" fill="#b5a574"/><path d="M142.4 950.4H153.4" stroke="#eee" stroke-width="1.1"/>
<!-- sRGB button -->
<rect x="164" y="933" width="19.2" height="24" rx="2.5" fill="#9b9b9b"/>
<!-- colour circle -->
<clipPath id="ccp"><circle cx="198.5" cy="944.8" r="5.700"/></clipPath>
<g clip-path="url(#ccp)"><rect x="192" y="938" width="5" height="14" fill="#d81818"/><rect x="200" y="938" width="6" height="14" fill="#1020c8"/><rect x="196.200" y="938" width="4.700" height="14" fill="#38c010"/></g>
<circle cx="198.5" cy="944.8" r="6.300" fill="none" stroke="#2b2b2b" stroke-width="1.200" opacity="0.6"/>
<!-- fit + 1:1 -->
<rect x="244.5" y="939.2" width="12.00" height="11.40" fill="#979797"/><path d="M244.5 943.8000000000001V939.2H249.1M251.9 939.2H256.5V943.8000000000001M256.5 946.0V950.6H251.9M249.1 950.6H244.5V946.0" stroke="#f4f4f4" stroke-width="1.6" fill="none" stroke-linecap="butt"/>
<rect x="284.500" y="933" width="1" height="24" fill="#444"/><rect x="401" y="933" width="1" height="24" fill="#444"/>
<circle cx="297.8" cy="944.5" r="4.500" fill="#6c6c6c"/><rect x="295.2" y="943.700" width="5.2" height="1.500" fill="#f4f4f4"/>
<rect x="308" y="937" width="70" height="16" rx="2" fill="#2a2a2a"/>
<circle cx="387.5" cy="944.5" r="4.500" fill="#6c6c6c"/><path d="M384.800 944.5H390.200M387.5 941.800V947.200" stroke="#f4f4f4" stroke-width="1.400"/>
<!-- lock -->
<path d="M410.600 942V940.500H414.600V944.500" stroke="#ececec" stroke-width="1.300" fill="none"/><rect x="413" y="944.200" width="7" height="5.800" fill="#dcdcdc"/><path d="M415.200 946.300h2.800M416.600 946.300v2.200" stroke="#222" stroke-width="1.100"/>
</svg>
<div class="t" style="left:124px;top:512px;font-size:11px;color:#5f5f5f;letter-spacing:-0.3px;">UV</div>
<div class="t" style="left:8px;top:510.5px;font-size:5.5px;font-weight:bold;color:#444;">A</div>
<div class="t" style="left:14.5px;top:515.5px;font-size:5.5px;font-weight:bold;color:#333;">B</div>
<div class="t" style="left:120px;top:937.5px;font-size:15px;font-style:italic;font-family:'Liberation Serif',serif;color:#e6e6e6;">i</div>
<div class="t" style="left:165.3px;top:941.6px;font-size:6.6px;font-weight:bold;letter-spacing:-0.2px;"><span style="color:#ddd;font-size:5.5px;">s</span><span style="color:#d03030;">R</span><span style="color:#30a030;">G</span><span style="color:#2030c8;">B</span></div>
<div class="t" style="left:263.400px;top:941px;font-size:9.300px;font-weight:bold;font-family:'NanumGothic','Liberation Sans',sans-serif;color:#e8e8e8;letter-spacing:-0.600px;">1:1</div>
<div class="t" style="left:308px;width:70px;text-align:center;top:939.5px;font-size:12px;color:#b0b0b0;letter-spacing:-0.2px;">75.00%</div>

<!-- ================= RIGHT: PARAMETERS PANEL ================= -->
<div class="a" style="left:426.2px;top:0;width:2.4px;height:960px;background:#151515;"></div>
<div class="a" style="left:0;top:479.2px;width:424px;height:1.8px;background:#151515;"></div>
<div class="a titlebar" style="left:429px;top:1px;width:471px;height:18px;"></div>
<div class="vsep" style="left:445px;top:1px;height:18px;"></div>
<div class="t" style="left:451px;top:4.5px;font-size:12.2px;color:#dcdcdc;letter-spacing:-0.2px;">Bruno_Dither_Grayscale</div>
<div class="vsep" style="left:841px;top:1px;height:18px;"></div>
<div class="vsep" style="left:862px;top:1px;height:18px;"></div>
<div class="vsep" style="left:881px;top:1px;height:18px;"></div>

<div class="a" style="left:429px;top:20px;width:461px;height:938px;background:#333333;"></div>
<div class="a" style="left:429px;top:20px;width:461px;height:62px;background:#2a2a2a;"></div>
<div class="hdr" style="top:20px;"><div class="arr"></div><div class="t">Base Parameters</div></div>
<div class="hdr" style="top:41px;"><div class="arr"></div><div class="t">Attributes</div></div>
<div class="hdr" style="top:62px;background:#4a4a4a;"><div class="arr" style="background:#444;"></div><div class="t">Instance Parameters</div></div>

<div class="t plabel" style="left:453px;top:90px;">Resolution</div>
<div class="t" style="left:463.3px;top:109.5px;font-size:11px;color:#c8c8c8;letter-spacing:-0.5px;">X</div>
<div class="slider" style="left:474px;top:107px;width:405.6px;"><div class="fill" style="width:203px;"></div></div>
<div class="t" style="left:463.3px;top:131.5px;font-size:11px;color:#c8c8c8;letter-spacing:-0.5px;">Y</div>
<div class="slider" style="left:474px;top:129.2px;width:405.6px;"><div class="fill" style="width:203px;"></div></div>
<div class="sep" style="top:155px;"></div>
<div class="t plabel" style="left:453px;top:163px;letter-spacing:-0.2px;">Shades</div>
<div class="slider" style="left:464px;top:180.2px;width:415.6px;"><div class="fill" style="width:416px;"></div></div>
<div class="sep" style="top:206px;"></div>
<div class="t plabel" style="left:453px;top:214px;">Pattern</div>
<div class="slider" style="left:464px;top:231.4px;width:415.6px;background:#474747;"></div>
<div class="t" style="left:468px;top:235.5px;font-size:11.5px;color:#dedede;letter-spacing:-0.3px;">Bayer 8x8</div>
<div class="sep" style="top:257px;"></div>

<!-- right panel icons -->
<svg style="left:426px;top:0;" width="474" height="270" viewBox="426 0 474 270">
<defs><linearGradient id="ng" x1="0" y1="0" x2="0" y2="1"><stop offset="0" stop-color="#b4b4b4"/><stop offset="1" stop-color="#858585"/></linearGradient></defs>
<!-- doc icon -->
<path d="M431.2 3.200H437.600L442 7.600V16.200H431.2Z" fill="#e2e2e2"/><path d="M437.600 3.200V7.600H442Z" fill="#a8a8a8"/>
<path d="M433 5.300H435.800" stroke="#666" stroke-width="1"/><g fill="#555"><circle cx="433.4" cy="9.400" r="0.600"/><circle cx="433.4" cy="11.500" r="0.600"/><circle cx="433.4" cy="13.600" r="0.600"/></g><path d="M435 9.400H440M435 11.500H440M435 13.600H440" stroke="#b4b4b4" stroke-width="0.9"/>
<!-- window buttons -->
<g transform="translate(475,0)" fill="none" stroke="#c4c4c4">
<path d="M371 14.500H383" stroke="#a0a0a0" stroke-width="1"/>
<path d="M373.300 5.300L377.300 9.300" stroke-width="3.400"/><path d="M374.800 11.900L379.900 6.800" stroke-width="1.300"/><path d="M377.300 9.300L381.400 13.400" stroke-width="1.100"/>
<path d="M395.600 6.200H400.600V10H399.200" stroke="#b8b8b8" stroke-width="1.100"/><path d="M395.100 5.600H401.100" stroke="#b8b8b8" stroke-width="1.500"/>
<rect x="393.600" y="9" width="4.700" height="4.400" stroke="#b8b8b8" stroke-width="1.100"/><path d="M393.100 8.800H398.900" stroke="#b8b8b8" stroke-width="1.500"/>
<path d="M412.200 6.400L419.800 14M419.800 6.400L412.200 14" stroke="#cfcfcf" stroke-width="1.100"/>
</g>
<!-- header arrows -->
<g fill="#bcbcbc"><path d="M434 25.800V34.200L441.200 30Z"/><path d="M434 46.800V55.200L441.200 51Z"/><path d="M433.800 68.400H442.400L438.100 75.400Z"/></g>
<!-- instance params icons -->
<rect x="830" y="62" width="31" height="20" fill="#525252"/>
<path d="M834.300 66.400H842.600V74L839.400 77.400H834.300Z" fill="url(#ng)"/><path d="M839.600 74.200H842.400L839.600 77.200Z" fill="#d0d0d0"/>
<path d="M863.200 67.400H870L874.400 71.600V78.400H863.200Z" fill="#ececec"/><path d="M864.600 72.400H873M864.600 74.600H873M864.600 76.800H873" stroke="#8a8a8a" stroke-width="0.9"/><path d="M870 67.400V71.600H874.400Z" fill="#9a9a9a"/>
<g fill="#c9c9c9"><path d="M851 70.200H857L854 74.600Z"/><path d="M881 70.200H887L884 74.600Z"/>
<path d="M851 92.600H857L854 97Z"/><path d="M881 92.600H887L884 97Z"/>
<path d="M851 165.600H857L854 170Z"/><path d="M881 165.600H887L884 170Z"/>
<path d="M851 216.600H857L854 221Z"/><path d="M881 216.600H887L884 221Z"/></g>
<!-- wave icons -->
<g id="wv" stroke="#7c7c7c" stroke-width="1.100" fill="none"><path d="M838.600 86.400V100.400" stroke="#6a6a6a"/><path d="M831.400 93.600A3.600 5.400 0 0 1 838.600 93.600A3.500 5.200 0 0 0 845.600 93.600V92.400" stroke="#7e7e7e" stroke-width="1.200"/></g>
<g stroke="#7c7c7c" stroke-width="1.100" fill="none" transform="translate(0,73)"><path d="M838.600 86.400V100.400" stroke="#6a6a6a"/><path d="M831.400 93.600A3.600 5.400 0 0 1 838.600 93.600A3.500 5.200 0 0 0 845.600 93.600V92.400" stroke="#7e7e7e" stroke-width="1.200"/></g>
<g stroke="#7c7c7c" stroke-width="1.100" fill="none" transform="translate(0,124)"><path d="M838.600 86.400V100.400" stroke="#6a6a6a"/><path d="M831.400 93.600A3.600 5.400 0 0 1 838.600 93.600A3.500 5.200 0 0 0 845.600 93.600V92.400" stroke="#7e7e7e" stroke-width="1.200"/></g>
<!-- slider handles -->
<rect x="677" y="108" width="2" height="15" fill="#7e7e7e"/><rect x="677" y="130" width="2" height="15" fill="#7e7e7e"/><rect x="879" y="181" width="1.500" height="15" fill="#a8a8a8"/>
<path d="M871.200 238.800H876.800L874 242.200Z" fill="#d0d0d0"/>
</svg>
<div class="t" style="left:648px;width:60px;text-align:center;top:112.100px;font-size:11.5px;color:#dedede;">32</div>
<div class="t" style="left:648px;width:60px;text-align:center;top:134.200px;font-size:11.5px;color:#dedede;">32</div>
<div class="t" style="left:642.500px;width:60px;text-align:center;top:185.100px;font-size:11.5px;color:#dedede;">8</div>
<!-- scrollbar -->
<div class="a" style="left:890px;top:20px;width:10px;height:938.500px;background:#1d1d1d;"></div>
<div class="a" style="left:891px;top:21px;width:8px;height:8px;background:#4e4e4e;border-radius:2px;"></div>
<div class="a" style="left:891px;top:30px;width:8px;height:919px;background:#4e4e4e;border-radius:2px;"></div>
<div class="a" style="left:891px;top:950px;width:8px;height:8px;background:#4e4e4e;border-radius:2px;"></div>

</body></html>
